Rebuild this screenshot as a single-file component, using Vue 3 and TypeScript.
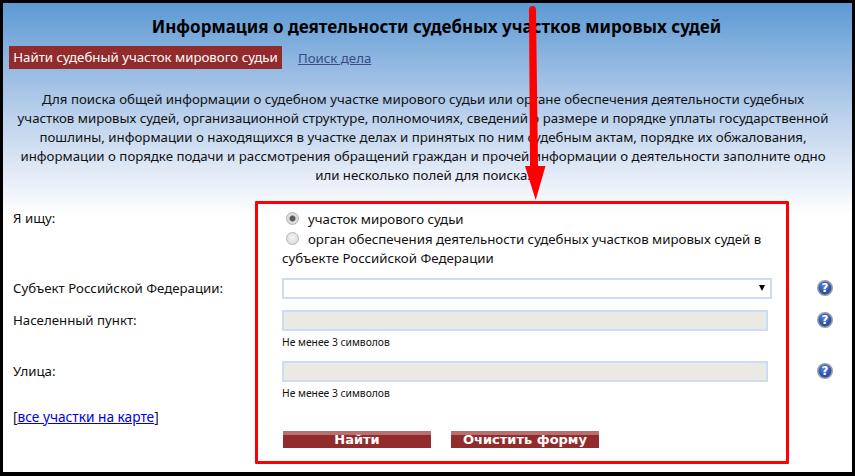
<script setup lang="ts">
// строки описания разбиты вручную, чтобы перенос совпадал с оригиналом
const intro: string[] = [
  'Для поиска общей информации о судебном участке мирового судьи или органе обеспечения деятельности судебных',
  'участков мировых судей, организационной структуре, полномочиях, сведений о размере и порядке уплаты государственной',
  'пошлины, информации о находящихся в участке делах и принятых по ним судебным актам, порядке их обжалования,',
  'информации о порядке подачи и рассмотрения обращений граждан и прочей информации о деятельности заполните одно',
  'или несколько полей для поиска.',
]

const textFields: string[] = ['Населенный пункт:', 'Улица:']
</script>

<template>
  <div class="frame">
    <h1 class="title">Информация о деятельности судебных участков мировых судей</h1>

    <nav class="tabs">
      <span class="tab-active">Найти судебный участок мирового судьи</span>
      <a class="tab-link" href="#">Поиск дела</a>
    </nav>

    <div class="intro">
      <div v-for="line in intro" :key="line">{{ line }}</div>
    </div>

    <form class="form" @submit.prevent>
      <div class="row row-kind">
        <div class="label">Я ищу:</div>
        <div class="options">
          <label class="option"><input class="radio" type="radio" name="kind" checked />участок мирового судьи</label>
          <label class="option"><input class="radio" type="radio" name="kind" />орган обеспечения деятельности судебных участков мировых судей в субъекте Российской Федерации</label>
        </div>
      </div>

      <div class="row row-subject">
        <div class="label">Субъект Российской Федерации:</div>
        <div class="select"><span class="select-arrow"></span></div>
        <svg class="help" viewBox="0 0 16 16" aria-label="Справка">
          <defs>
            <radialGradient id="helpBlue" cx="45%" cy="35%" r="70%">
              <stop offset="0" stop-color="#5f86d6" />
              <stop offset="0.6" stop-color="#2f55b0" />
              <stop offset="1" stop-color="#22429a" />
            </radialGradient>
          </defs>
          <circle cx="8" cy="8" r="7.2" fill="url(#helpBlue)" stroke="#989ea8" stroke-width="1.6" />
          <text x="8" y="12.300" text-anchor="middle" class="help-mark">?</text>
        </svg>
      </div>

      <div v-for="field in textFields" :key="field" class="row row-field">
        <div class="label">{{ field }}</div>
        <div>
          <input class="input" type="text" disabled />
          <div class="hint">Не менее 3 символов</div>
        </div>
        <svg class="help" viewBox="0 0 16 16" aria-label="Справка">
          <circle cx="8" cy="8" r="7.2" fill="url(#helpBlue)" stroke="#989ea8" stroke-width="1.6" />
          <text x="8" y="12.300" text-anchor="middle" class="help-mark">?</text>
        </svg>
      </div>

      <div class="row row-actions">
        <div class="map-link">[<a href="#">все участки на карте</a>]</div>
        <div class="buttons">
          <button class="btn" type="submit">Найти</button>
          <button class="btn" type="reset">Очистить форму</button>
        </div>
      </div>
    </form>

    <!-- пометки поверх скриншота -->
    <div class="mark-box"></div>
    <svg class="mark-arrow" viewBox="0 0 855 476">
      <path d="M529 10 Q529 6 532.500 6 Q536 6 536 10 L538 166 L545.500 166 L535.700 200 L525 166 L530 166 Z" fill="#ff0000" />
    </svg>
  </div>
</template>

<style>
html,
body {
  margin: 0;
  background: #fff;
}
</style>

<style scoped>
.frame {
  position: relative;
  box-sizing: border-box;
  width: 855px;
  height: 476px;
  overflow: hidden;
  border: solid #000;
  border-width: 3px 3px 4px 3px;
  background: linear-gradient(180deg, #5b9ad4 0, #8db5e0 55px, #b9d0ec 110px, #e2ebf7 170px, #fff 212px);
  font-family: "Noto Sans", sans-serif;
  font-size: 13.250px;
  color: #111;
}

.title {
  margin: 0;
  padding: 14px 0 0 18px;
  height: 29px;
  font-size: 17px;
  line-height: 20px;
  font-weight: 700;
  text-align: center;
  color: #000;
}

.tabs {
  display: flex;
  align-items: center;
  gap: 16px;
  margin: 0 0 0 6px;
  height: 23px;
}

.tab-active {
  box-sizing: border-box;
  width: 273px;
  line-height: 23px;
  text-align: center;
  background: #922b2b;
  color: #fff;
}

.tab-link {
  color: #3c4a8c;
}

.intro {
  margin-top: 21px;
  padding-right: 9px;
  line-height: 19px;
  text-align: center;
  white-space: nowrap;
}

.form {
  margin-top: 24px;
  padding-left: 10px;
}

.row {
  display: grid;
  grid-template-columns: 269px 490px 16px;
  column-gap: 0;
}

.row .help {
  margin-left: 45px;
}

.options {
  padding-top: 1px;
}

.row-subject {
  margin-top: 9px;
  height: 32px;
}

.row-subject .label {
  line-height: 21px;
}

.row-field {
  height: 51px;
}

.row-field .label {
  line-height: 21px;
}

.row-field .help {
  margin-top: 2px;
}

.row-subject .help {
  margin-top: 2px;
}

.row-actions {
  margin-top: -5px;
  height: 50px;
}

.label {
  line-height: 19px;
}

.option {
  display: block;
  line-height: 19.500px;
}

.radio {
  appearance: none;
  box-sizing: border-box;
  display: inline-block;
  width: 13px;
  height: 13px;
  margin: 0 9px 0 4px;
  vertical-align: -1px;
  border: 1px solid #b4b4b4;
  border-radius: 50%;
  background: radial-gradient(circle at 50% 40%, #f4f4f4, #d6d6d6);
}

.radio:checked {
  background: radial-gradient(circle, #5c5c5c 0 2.500px, #dcdcdc 3.500px);
}

.select {
  position: relative;
  box-sizing: border-box;
  width: 490px;
  height: 21px;
  border: 2px solid #cbdcf3;
  background: #fff;
}

.select-arrow {
  position: absolute;
  top: 5px;
  right: 5px;
  border-top: 6px solid #000;
  border-left: 3px solid transparent;
  border-right: 3px solid transparent;
}

.input {
  display: block;
  box-sizing: border-box;
  width: 486px;
  height: 21px;
  margin: 0;
  padding: 0;
  border: 2px solid #cbdcf3;
  background: #ebe9e3;
}

.hint {
  margin-top: 4px;
  font-size: 10.300px;
  line-height: 14px;
}

.help {
  width: 16px;
  height: 16px;
}

.help-mark {
  font-family: "DejaVu Sans", sans-serif;
  font-size: 12px;
  font-weight: 700;
  fill: #fff;
}

.map-link {
  font-size: 13.700px;
  line-height: 19px;
}

.map-link a {
  color: #0000ee;
}

.buttons {
  display: flex;
  gap: 20px;
  margin-left: 1px;
  padding-top: 24px;
}

.btn {
  width: 148px;
  height: 17px;
  padding: 0;
  border: 0;
  background: linear-gradient(180deg, #b96f6f 0 4px, #922b2b 4px);
  color: #fff;
  font-family: "DejaVu Sans", sans-serif;
  font-size: 13px;
  font-weight: 700;
  line-height: 17px;
}

.mark-box {
  position: absolute;
  left: 252px;
  top: 198px;
  box-sizing: border-box;
  width: 534px;
  height: 263px;
  border: 3px solid #ff0000;
  border-radius: 1px;
}

.mark-arrow {
  position: absolute;
  left: -3px;
  top: -3px;
  width: 855px;
  height: 476px;
}
</style>
